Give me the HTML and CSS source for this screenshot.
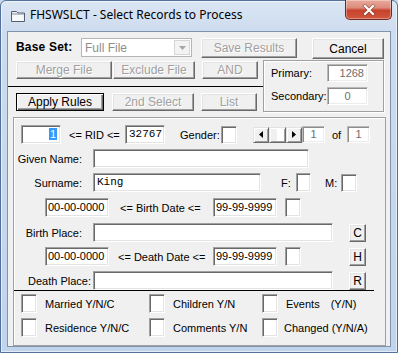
FILE: index.html
```html
<!DOCTYPE html>
<html lang="en">
<head>
    <meta charset="UTF-8">
    <title>FHSWSLCT - Select Records to Process</title>
    <link rel="stylesheet" href="styles.css">
</head>
<body>
    <div class="window">
        <div class="titlebar">
            <svg class="app-icon" width="16" height="14" viewBox="0 0 16 14">
                <path d="M1.5 2.5h5l1.5 1.5h6.5v8.5h-13z" fill="#e9edf2" stroke="#56606c"/>
                <path d="M2 5h12" stroke="#8e98a4"/>
                <path d="M2.5 6h11v6h-11z" fill="#f8f9fb"/>
            </svg>
            <span class="title">FHSWSLCT - Select Records to Process</span>
            <div class="close-btn">
                <svg width="14" height="12" viewBox="0 0 14 12">
                    <path d="M3 2l8 8M11 2l-8 8" stroke="#5a1c14" stroke-width="3.6" stroke-linecap="square" opacity="0.45"/>
                    <path d="M3 2l8 8M11 2l-8 8" stroke="#fff" stroke-width="2.2" stroke-linecap="square"/>
                </svg>
            </div>
        </div>

        <div class="client">
            <!-- base set row -->
            <div class="row-a">
                <span class="base-label">Base Set:</span>
                <div class="combo">
                    <span class="combo-text">Full File</span>
                    <span class="combo-btn">
                        <svg width="7" height="4" viewBox="0 0 7 4"><path d="M0 0h7L3.5 4z" fill="#a6a6a6"/></svg>
                    </span>
                </div>
                <button class="btn off save-btn">Save Results</button>
                <button class="btn cancel-btn">Cancel</button>
            </div>

            <div class="mid">
                <div class="mid-left">
                    <div class="btn-row first">
                        <button class="btn off wide-btn">Merge File</button>
                        <button class="btn off mid-btn exclude-btn">Exclude File</button>
                        <button class="btn off small-btn">AND</button>
                    </div>
                    <div class="sep"></div>
                    <div class="btn-row">
                        <button class="btn default apply-btn">Apply Rules</button>
                        <button class="btn off mid-btn second-btn">2nd Select</button>
                        <button class="btn off small-btn">List</button>
                    </div>
                </div>
                <div class="count-box">
                    <div class="count-row">
                        <span class="count-label">Primary:</span>
                        <div class="field dim count-field right">1268</div>
                    </div>
                    <div class="count-row second">
                        <span class="count-label">Secondary:</span>
                        <div class="field dim count-field center">0</div>
                    </div>
                </div>
            </div>

            <!-- selection rules -->
            <div class="panel">
                <div class="prow rid-row">
                    <div class="field rid-field right"><span class="sel">1</span></div>
                    <span class="rid-label">&lt;= RID &lt;=</span>
                    <div class="field rid-field mono">32767</div>
                    <span class="gender-label">Gender:</span>
                    <div class="field box"></div>
                    <div class="scroller">
                        <span class="sb-btn"><svg width="4" height="7" viewBox="0 0 4 7"><path d="M4 0v7L0 3.5z"/></svg></span>
                        <span class="sb-thumb"></span>
                        <span class="sb-btn"><svg width="4" height="7" viewBox="0 0 4 7"><path d="M0 0v7l4-3.5z"/></svg></span>
                    </div>
                    <div class="field dim nav-field center">1</div>
                    <span class="of-label">of</span>
                    <div class="field dim nav-field center">1</div>
                </div>

                <div class="prow gap5">
                    <span class="plabel">Given Name:</span>
                    <div class="field given-field"></div>
                </div>

                <div class="prow gap5">
                    <span class="plabel">Surname:</span>
                    <div class="field surname-field mono">King</div>
                    <span class="sex-label f-label">F:</span>
                    <div class="field sex-box"></div>
                    <span class="sex-label m-label">M:</span>
                    <div class="field box"></div>
                </div>

                <div class="prow gap6 date-row">
                    <div class="field date-field">00-00-0000</div>
                    <span class="date-label">&lt;= Birth Date &lt;=</span>
                    <div class="field date-field">99-99-9999</div>
                    <div class="field box flag-box"></div>
                </div>

                <div class="prow gap6">
                    <span class="plabel">Birth Place:</span>
                    <div class="field place-field"></div>
                    <button class="btn letter-btn">C</button>
                </div>

                <div class="prow gap5 date-row">
                    <div class="field date-field">00-00-0000</div>
                    <span class="date-label death">&lt;= Death Date &lt;=</span>
                    <div class="field date-field">99-99-9999</div>
                    <div class="field box flag-box"></div>
                    <button class="btn letter-btn h-btn">H</button>
                </div>

                <div class="prow gap5">
                    <span class="plabel death-place">Death Place:</span>
                    <div class="field place-field"></div>
                    <button class="btn letter-btn">R</button>
                </div>

                <div class="psep"></div>

                <div class="prow check-row first">
                    <div class="ccell c1"><div class="field box"></div><span>Married Y/N/C</span></div>
                    <div class="ccell c2"><div class="field box"></div><span>Children Y/N</span></div>
                    <div class="ccell"><div class="field box"></div><span>Events</span><span class="yn">(Y/N)</span></div>
                </div>
                <div class="prow check-row">
                    <div class="ccell c1"><div class="field box"></div><span>Residence Y/N/C</span></div>
                    <div class="ccell c2"><div class="field box"></div><span>Comments Y/N</span></div>
                    <div class="ccell"><div class="field box"></div><span class="changed">Changed (Y/N/A)</span></div>
                </div>
            </div>
        </div>
    </div>
</body>
</html>
```

FILE: styles.css
```css
* {
    box-sizing: border-box;
}

body {
    margin: 0;
    font-family: "Liberation Sans", Arial, sans-serif;
    font-size: 11px;
    color: #000;
    background: #c9d9ec;
}

/* window frame */
.window {
    width: 398px;
    height: 353px;
    border: 1px solid #53719a;
    border-radius: 6px 6px 0 0;
    background: linear-gradient(to bottom, #dbe6f3 0, #cddcef 30px, #c0d4ec 100%);
    box-shadow: inset 0 0 0 1px rgba(255,255,255,0.55);
    padding: 0 6px 5px 6px;
    display: flex;
    flex-direction: column;
}

.titlebar {
    height: 30px;
    display: flex;
    align-items: flex-start;
}

.app-icon {
    margin: 8px 0 0 3px;
}

.title {
    margin: 6px 0 0 4px;
    font-family: "Noto Sans", "Open Sans", sans-serif;
    font-size: 12px;
    line-height: 16px;
    color: #000;
}

.close-btn {
    margin: -1px -1px 0 auto;
    width: 47px;
    height: 20px;
    border: 1px solid #6d2a22;
    border-top: none;
    border-radius: 0 0 5px 5px;
    background: linear-gradient(to bottom, #e9a99b 0, #dc8c7c 40%, #c8432d 55%, #d0563c 100%);
    box-shadow: inset 0 0 0 1px rgba(255,255,255,0.35);
    display: flex;
    align-items: center;
    justify-content: center;
}

.client {
    flex: 1;
    background: #f0f0f0;
    border: 1px solid #7f93ad;
    padding-top: 6px;
}

.row-a > *,
.btn-row > *,
.count-row > *,
.prow > *,
.ccell > * {
    flex-shrink: 0;
    white-space: nowrap;
}

/* generic controls */
.btn {
    font: inherit;
    padding: 0;
    margin: 0;
    background: #f0f0f0;
    border: 1px solid;
    border-color: #fff #696969 #696969 #fff;
    box-shadow: inset -1px -1px 0 #a0a0a0, inset 1px 1px 0 #e3e3e3;
    color: #000;
    height: 18px;
    line-height: 14px;
}

.btn.off {
    color: #a0a0a0;
    text-shadow: 1px 1px 0 #fff;
}

.btn.default {
    border: 1px solid #000;
    box-shadow: inset 1px 1px 0 #fff, inset -1px -1px 0 #696969, inset -2px -2px 0 #a0a0a0;
}

.field {
    background: #fff;
    border: 1px solid;
    border-color: #a0a0a0 #fff #fff #a0a0a0;
    box-shadow: inset 1px 1px 0 #696969, inset -1px -1px 0 #e3e3e3;
    height: 19px;
    padding: 0 3px;
    line-height: 17px;
    white-space: nowrap;
    overflow: hidden;
}

.field.dim {
    color: #6d6d6d;
    border-color: #b9b9b9 #fff #fff #b9b9b9;
    box-shadow: inset 1px 1px 0 #8c8c8c, inset -1px -1px 0 #ececec;
}

.right {
    text-align: right;
}

.center {
    text-align: center;
}

.mono {
    font-family: "Liberation Mono", "Courier New", monospace;
    font-size: 11px;
}

/* top rows */
.row-a {
    display: flex;
    align-items: flex-start;
    height: 21px;
    padding-left: 8px;
}

.base-label {
    width: 65px;
    font-weight: bold;
    font-size: 12px;
    line-height: 19px;
    letter-spacing: 0.2px;
}

.combo {
    width: 111px;
    height: 19px;
    background: #fff;
    border: 1px solid #b5b5b5;
    display: flex;
    align-items: center;
    justify-content: space-between;
    padding: 1px;
}

.combo-text {
    color: #8d8d8d;
    padding-left: 2px;
    font-size: 12px;
}

.combo-btn {
    width: 16px;
    height: 15px;
    background: #f3f3f3;
    border: 1px solid #d6d6d6;
    display: flex;
    align-items: center;
    justify-content: center;
}

.save-btn {
    margin-left: 9px;
    width: 96px;
    height: 20px;
    font-size: 12px;
}

.cancel-btn {
    margin-left: 15px;
    width: 72px;
    height: 21px;
    font-size: 12px;
}

.mid {
    display: flex;
    margin-top: 1px;
    height: 52px;
}

.mid-left {
    width: 255px;
}

.btn-row {
    display: flex;
    padding-left: 8px;
    margin-top: 6px;
}

.btn-row.first {
    margin-top: 1px;
}

.btn-row .btn {
    font-size: 12px;
}

.wide-btn {
    width: 96px;
}

.mid-btn {
    width: 82px;
}

.exclude-btn {
    margin-left: 1px;
}

.second-btn {
    margin-left: 8px;
}

.small-btn {
    margin-left: 7px;
    width: 56px;
}

.apply-btn {
    width: 88px;
}

.sep {
    margin-top: 7px;
    height: 1px;
    background: #000;
}

.count-box {
    width: 121px;
    height: 52px;
    border: 1px solid #a0a0a0;
    box-shadow: inset 1px 1px 0 #fff, 1px 1px 0 #fff;
    padding: 3px 0 0 7px;
}

.count-row {
    display: flex;
    align-items: center;
}

.count-row.second {
    margin-top: 5px;
}

.count-label {
    width: 56px;
    font-size: 11px;
}

.count-field {
    width: 41px;
    height: 18px;
    font-size: 11px;
}

/* main panel */
.panel {
    margin: 5px 0 0 5px;
    width: 373px;
    height: 229px;
    border: 1px solid #a0a0a0;
    box-shadow: inset 1px 1px 0 #fff;
    padding-top: 7px;
}

.prow {
    display: flex;
    align-items: center;
    height: 19px;
}

.gap5 {
    margin-top: 5px;
}

.gap6 {
    margin-top: 6px;
}

.rid-row {
    padding-left: 7px;
}

.rid-field {
    width: 40px;
}

.sel {
    background: #3399ff;
    color: #fff;
    padding: 0 1px;
}

.rid-label {
    margin-left: 8px;
    width: 56px;
}

.gender-label {
    margin-left: 15px;
    width: 41px;
}

.box {
    width: 16px;
    height: 18px;
}

.scroller {
    margin-left: 16px;
    width: 49px;
    height: 16px;
    display: flex;
    background: #f8f8f8;
}

.sb-btn,
.sb-thumb {
    width: 16px;
    height: 16px;
    background: #f0f0f0;
    border: 1px solid;
    border-color: #e3e3e3 #696969 #696969 #e3e3e3;
    box-shadow: inset 1px 1px 0 #fff, inset -1px -1px 0 #a0a0a0;
    display: flex;
    align-items: center;
    justify-content: center;
}

.sb-thumb {
    width: 17px;
    background: linear-gradient(to right, #f0f0f0 0, #f0f0f0 50%, #fff 50%);
}

.nav-field {
    width: 23px;
    height: 17px;
    line-height: 15px;
}

.of-label {
    margin-left: 7px;
    width: 15px;
}

.plabel {
    width: 79px;
    padding-right: 11px;
    text-align: right;
}

.plabel.death-place {
    padding-right: 2px;
}

.given-field {
    width: 216px;
}

.surname-field {
    width: 168px;
}

.sex-label {
    width: 16px;
}

.f-label {
    margin-left: 20px;
    width: 15px;
}

.m-label {
    margin-left: 14px;
}

.sex-box {
    width: 15px;
}

.date-row {
    padding-left: 31px;
}

.date-field {
    width: 64px;
    padding: 0 2px;
}

.date-label {
    margin-left: 11px;
    width: 93px;
}

.date-label.death {
    margin-left: 9px;
    width: 95px;
}

.flag-box {
    margin-left: 8px;
    height: 19px;
}

.place-field {
    width: 240px;
}

.letter-btn {
    margin-left: 16px;
    width: 17px;
    height: 18px;
    font-size: 12px;
}

.h-btn {
    margin-left: 48px;
}

.psep {
    width: 360px;
    height: 1px;
    background: #000;
}

.check-row {
    margin-top: 5px;
    padding-left: 7px;
}

.check-row.first {
    margin-top: 3px;
}

.ccell {
    display: flex;
    align-items: center;
}

.ccell .box {
    height: 19px;
    margin-right: 8px;
}

.ccell.c1 {
    width: 128px;
}

.ccell.c2 {
    width: 113px;
}

.yn {
    margin-left: 11px;
}

.changed {
    margin-left: -2px;
}
```
